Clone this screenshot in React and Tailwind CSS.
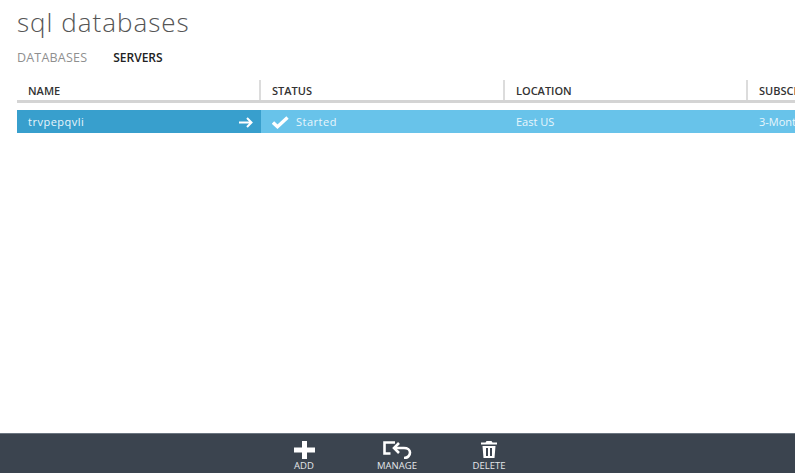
function HeadCell({ label, width, last }) {
  return (
    <div className={`flex h-[20px] shrink-0 items-center pt-[2px] pl-[11px] text-[11px] font-semibold text-[#333] ${last ? '' : 'border-r-2 border-[#dcdcdc]'}`} style={{ width }}>
      {label}
    </div>
  );
}

function ActionButton({ label, children, width }) {
  return (
    <div className="flex shrink-0 flex-col items-center" style={{ width }}>
      <div className="flex h-[21px] items-center justify-center">{children}</div>
      <span className="text-[9.5px] leading-[12px] font-medium text-[#e4e7ea]">{label}</span>
    </div>
  );
}

export default function App() {
  return (
    <div className="flex h-[473px] w-[795px] flex-col overflow-hidden bg-white font-['Open_Sans',sans-serif]">
      <div className="flex-1 pl-[17px]">
        <h1 className="pt-[6px] text-[26px] leading-[32px] font-light tracking-[1px] text-[#555]">sql databases</h1>
        <div className="mt-[12px] flex gap-[26px] leading-[16px]">
          <span className="text-[12.5px] font-medium tracking-[0.2px] text-[#8f8f8f]">DATABASES</span>
          <span className="text-[12px] font-semibold text-[#222]">SERVERS</span>
        </div>
        <div className="mt-[14px] flex w-[778px] overflow-hidden border-b-[3px] border-[#d4d4d4]">
          <HeadCell label="NAME" width={244} />
          <HeadCell label="STATUS" width={244} />
          <HeadCell label="LOCATION" width={243} />
          <HeadCell label="SUBSCRIPTION" width={120} last />
        </div>
        <div className="mt-[7px] flex h-[23px] w-[778px] overflow-hidden bg-[#68c3ea] text-[11px] font-medium text-[#e9f6fc]">
          <div className="flex w-[244px] shrink-0 items-center justify-between bg-[#389fcd] pt-[1px] pr-[8px] pl-[11px]">
            <span className="tracking-[0.5px]">trvpepqvli</span>
            <svg width="14" height="11" viewBox="0 0 14 11" fill="none" stroke="#fff" strokeWidth="2">
              <path d="M0 5.500h12M8 1l4.500 4.500L8 10" />
            </svg>
          </div>
          <div className="flex w-[244px] shrink-0 items-center pt-[1px] pl-[11px]">
            <svg width="17" height="13" viewBox="0 0 17 13" fill="none" stroke="#fff" strokeWidth="3.400" className="mr-[7px]">
              <path d="M1 6.500l4.500 4.200L15.500 1.500" />
            </svg>
            <span className="tracking-[0.5px]">Started</span>
          </div>
          <div className="flex w-[243px] shrink-0 items-center pt-[1px] pl-[11px]">East US</div>
          <div className="flex w-[120px] shrink-0 items-center whitespace-nowrap pt-[1px] pl-[11px]">3-Month Free Trial</div>
        </div>
      </div>
      <div className="flex h-[40px] items-start border-t border-[#6b7580] bg-[#3b444f] pt-[5px] pl-[264px]">
        <ActionButton label="ADD" width={80}>
          <svg width="21" height="18" viewBox="0 0 21 18" fill="#fff">
            <path d="M8 0h5v6.500h8v5h-8V18H8v-6.500H0v-5h8z" />
          </svg>
        </ActionButton>
        <ActionButton label="MANAGE" width={106}>
          <svg width="29" height="18" viewBox="0 0 29 18" fill="none" stroke="#fff" strokeWidth="2.600">
            <path d="M7.500 12.500H1.500V1.500H12" />
            <path d="M11 7h10c3.500 0 6 1.800 6 4.500S25 17 21 17" />
            <path d="M16 2l-5 5 5 5" />
          </svg>
        </ActionButton>
        <ActionButton label="DELETE" width={78}>
          <svg width="16" height="17" viewBox="0 0 16 17" fill="#fff">
            <path d="M5.500 0h5l1 1.500H16V3.500H0V1.500h4.500zM1.500 5h13l-1 12h-11zM5 7v8h2V7zm4 0v8h2V7z" fillRule="evenodd" />
          </svg>
        </ActionButton>
      </div>
    </div>
  );
}
